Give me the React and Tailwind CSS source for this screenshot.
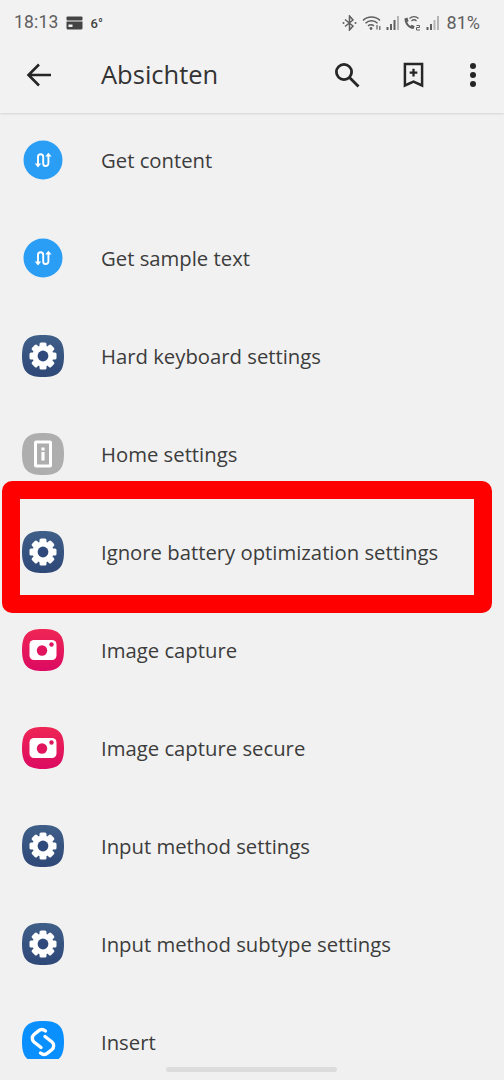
import React from 'react';

const SQUIRCLE = 'M21 0C36.5 0 42 5.5 42 21S36.5 42 21 42 0 36.5 0 21 5.5 0 21 0Z';

function Gear({ id }) {
  return (
    <svg width="42" height="42" viewBox="0 0 42 42" className="block">
      <defs>
        <linearGradient id={id} x1="0" y1="0" x2="0" y2="1">
          <stop offset="0" stopColor="#3f5f88" />
          <stop offset="1" stopColor="#2e4878" />
        </linearGradient>
      </defs>
      <path d={SQUIRCLE} fill={`url(#${id})`} />
      <g fill="#fff">
        <circle cx="21" cy="21" r="10.5" />
        {[0, 45, 90, 135, 180, 225, 270, 315].map((a) => (
          <rect key={a} x="17.5" y="7.5" width="7" height="6" rx="1.6" transform={`rotate(${a} 21 21)`} />
        ))}
      </g>
      <circle cx="21" cy="21" r="5.4" fill="#30497c" />
    </svg>
  );
}

function Flow() {
  return (
    <svg width="42" height="42" viewBox="0 0 42 42" className="block">
      <circle cx="21" cy="21" r="19.5" fill="#2a9df4" />
      <path d="M16 25.5V17.8a2.6 2.6 0 0 1 5.2 0v6.6a2.6 2.6 0 0 0 5.2 0V17" fill="none" stroke="#fff" strokeWidth="1.9" />
      <path d="M12.8 24.6h6.4L16 28.4ZM23.2 17.6h6.4L26.4 13.8Z" fill="#fff" />
    </svg>
  );
}

function Info() {
  return (
    <svg width="42" height="42" viewBox="0 0 42 42" className="block">
      <path d={SQUIRCLE} fill="#aeaeae" />
      <rect x="12" y="7.5" width="18" height="27" rx="2" fill="#fff" />
      <rect x="15" y="10.5" width="12" height="21" fill="#aeaeae" />
      <rect x="19.4" y="14.5" width="3.2" height="3" fill="#fff" />
      <rect x="19.4" y="19" width="3.2" height="8.5" fill="#fff" />
    </svg>
  );
}

function Camera({ id }) {
  return (
    <svg width="42" height="42" viewBox="0 0 42 42" className="block">
      <defs>
        <linearGradient id={id} x1="0" y1="0" x2="0" y2="1">
          <stop offset="0" stopColor="#ee2654" />
          <stop offset="1" stopColor="#dc0a62" />
        </linearGradient>
      </defs>
      <path d={SQUIRCLE} fill={`url(#${id})`} />
      <rect x="7.5" y="11" width="27" height="20" rx="4.5" fill="#fff" />
      <circle cx="20" cy="21.5" r="5.2" fill="#e0155e" />
      <circle cx="29.5" cy="15.5" r="2.2" fill="#e0155e" />
    </svg>
  );
}

function Shazam() {
  return (
    <svg width="42" height="42" viewBox="0 0 42 42" className="block">
      <path d={SQUIRCLE} fill="#0a8fff" />
      <g fill="none" stroke="#fff" strokeWidth="3.4" strokeLinecap="round" strokeLinejoin="round">
        <path d="M23.5 10C21 8 18.5 8.2 16.5 9.8L12 13.5a5 5 0 0 0 0 7.5L19 26.5" />
        <path d="M18.5 32C21 34 23.5 33.8 25.5 32.2L30 28.5a5 5 0 0 0 0-7.5L23 15.5" />
      </g>
    </svg>
  );
}

const rows = [
  { label: 'Get content', icon: <Flow /> },
  { label: 'Get sample text', icon: <Flow /> },
  { label: 'Hard keyboard settings', icon: <Gear id="g1" /> },
  { label: 'Home settings', icon: <Info /> },
  { label: 'Ignore battery optimization settings', icon: <Gear id="g2" /> },
  { label: 'Image capture', icon: <Camera id="c1" /> },
  { label: 'Image capture secure', icon: <Camera id="c2" /> },
  { label: 'Input method settings', icon: <Gear id="g3" /> },
  { label: 'Input method subtype settings', icon: <Gear id="g4" /> },
  { label: 'Insert', icon: <Shazam /> },
];

function StatusIcons() {
  return (
    <div className="flex items-center text-[#5f5f5f]">
      {/* bluetooth */}
      <svg width="15" height="16" viewBox="0 0 15 16" className="mr-[5px]" fill="none" stroke="#5f5f5f" strokeWidth="1.5">
        <path d="M3 4.5 11 11 7.5 15V1L11 5 3 11.5" />
        <circle cx="1.5" cy="8" r="1" fill="#5f5f5f" stroke="none" />
        <circle cx="13.5" cy="8" r="1" fill="#5f5f5f" stroke="none" />
      </svg>
      {/* wifi */}
      <svg width="20" height="16" viewBox="0 0 20 16" fill="none" stroke="#5f5f5f" strokeWidth="1.5" className="mr-[4px]">
        <path d="M1 5.5a12 12 0 0 1 17 0M3.5 8.2a8.4 8.4 0 0 1 12 0M6 10.8a5 5 0 0 1 6 0" />
        <circle cx="9" cy="13.5" r="1.4" fill="#5f5f5f" stroke="none" />
        <path d="M15 10v4.5M17.8 15v-4" strokeWidth="1.2" />
      </svg>
      {/* signal 1 */}
      <svg width="14" height="16" viewBox="0 0 14 16" className="mr-[3px]" fill="#5f5f5f">
        <rect x="0.5" y="12" width="2" height="3" />
        <rect x="4" y="9" width="2" height="6" />
        <rect x="7.5" y="5" width="2" height="10" />
        <rect x="11" y="1" width="2" height="14" fill="#b5b5b5" />
      </svg>
      {/* call wifi sim 2 */}
      <svg width="19" height="16" viewBox="0 0 19 16" className="mr-[4px]" fill="none" stroke="#5f5f5f">
        <path d="M1.5 3.5c0 6 4 10 9 10.5l1.2-2.8-3-1.4-1.2 1.2C6 10 4.6 8.4 4.2 7L5.6 6 4.4 2.6Z" fill="#5f5f5f" stroke="none" />
        <path d="M6.5 3.5a6.5 6.5 0 0 1 9 0M8.5 6a3.6 3.6 0 0 1 5 0" strokeWidth="1.3" />
        <path d="M13.5 10.5h3v2h-3v2.5h3.5" strokeWidth="1" />
      </svg>
      {/* signal 2 */}
      <svg width="14" height="16" viewBox="0 0 14 16" className="mr-[7px]" fill="#5f5f5f">
        <rect x="0.5" y="12" width="2" height="3" />
        <rect x="4" y="9" width="2" height="6" />
        <rect x="7.5" y="5" width="2" height="10" fill="#b5b5b5" />
        <rect x="11" y="1" width="2" height="14" fill="#b5b5b5" />
      </svg>
      <span className="text-[18px] leading-none">81%</span>
    </div>
  );
}

export default function App() {
  return (
    <div className="relative w-[504px] h-[1080px] overflow-hidden bg-[#f1f1f1] font-['Open_Sans',sans-serif]">
      <header className="h-[113px] shadow-[0_1px_2px_rgba(0,0,0,0.12)] relative z-10 bg-[#f2f2f2]">
        {/* status bar */}
        <div className="h-[46px] pl-[14px] pr-[24px] flex items-center justify-between font-['Roboto',sans-serif]">
          <div className="flex items-center text-[#5f5f5f]">
            <span className="text-[17.5px] leading-none tracking-[0.2px]">18:13</span>
            <svg width="17" height="14" viewBox="0 0 17 14" className="ml-[7px]">
              <rect x="0.5" y="0.5" width="16" height="4" rx="1" fill="#444" />
              <path d="M0.5 5.5h16V12a1.5 1.5 0 0 1-1.5 1.5H2A1.5 1.5 0 0 1 0.5 12Z" fill="#444" />
              <rect x="2.5" y="8.5" width="4" height="2.5" fill="#f2f2f2" />
            </svg>
            <span className="ml-[8px] text-[13px] leading-none font-medium text-[#444]">6°</span>
          </div>
          <StatusIcons />
        </div>
        {/* toolbar */}
        <div className="h-[58px] flex items-center">
          <svg width="28" height="28" viewBox="0 0 28 28" fill="none" stroke="#262626" strokeWidth="2.6" className="ml-[25px]">
            <path d="M26 14H4M14 3.5 3.5 14 14 24.5" />
          </svg>
          <h1 className="ml-[48px] text-[25.5px] leading-none font-medium text-[#333]">Absichten</h1>
          <svg width="26" height="26" viewBox="0 0 26 26" fill="none" stroke="#262626" strokeWidth="2.8" className="ml-auto">
            <circle cx="10" cy="10" r="7.6" />
            <path d="m15.5 15.5 9 9" />
          </svg>
          <svg width="21" height="26" viewBox="0 0 22 26" fill="none" stroke="#262626" strokeWidth="2.6" className="ml-[43px]">
            <path d="M2 1.5h18v22.5l-9-4-9 4Z" />
            <path d="M11 6.5v8M7 10.5h8" strokeWidth="2.4" />
          </svg>
          <div className="ml-[46px] mr-[28px] flex flex-col gap-[3px]">
            <div className="w-[6px] h-[6px] rounded-full bg-[#262626]" />
            <div className="w-[6px] h-[6px] rounded-full bg-[#262626]" />
            <div className="w-[6px] h-[6px] rounded-full bg-[#262626]" />
          </div>
        </div>
      </header>

      <ul className="-mt-0.5">
        {rows.map((r) => (
          <li key={r.label} className="h-[98px] pl-[22px] flex items-center">
            <div className="w-[42px] h-[42px] shrink-0">{r.icon}</div>
            <span className="ml-[37px] text-[20.3px] leading-[21px] text-[#3c3c3c]">{r.label}</span>
          </li>
        ))}
      </ul>

      {/* gesture bar over the cut off last row */}
      <div className="absolute left-0 right-0 bottom-0 h-[21px] bg-[#f0f0f0]">
        <div className="absolute left-[166px] top-[8px] w-[171px] h-[5px] rounded-full bg-[#dcdcdc]" />
      </div>

      {/* red highlight drawn on the screenshot */}
      <div className="absolute left-[2px] top-[481px] w-[490px] h-[132px] border-[18px] border-[#ff0000] rounded-[10px] z-20" />
    </div>
  );
}
